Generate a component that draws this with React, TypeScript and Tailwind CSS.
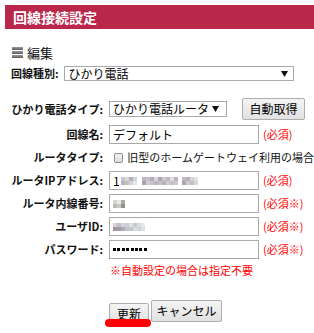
const font = "font-['Noto_Sans_CJK_JP','Noto_Sans',sans-serif]";

function Mosaic({ cols }: { cols: string[][] }) {
  return (
    <div className="flex">
      {cols.map((col, i) => (
        <div key={i} className="flex flex-col">
          {col.map((c, j) => (
            <div key={j} className={`w-[4px] h-[4px] ${c}`} />
          ))}
        </div>
      ))}
    </div>
  );
}

function Arrow() {
  return (
    <svg width="7" height="6" viewBox="0 0 7 6" className="shrink-0">
      <path d="M0 0 H7 L3.5 6 Z" fill="#111" />
    </svg>
  );
}

function Label({ children }: { children: React.ReactNode }) {
  return <div className="w-[103px] shrink-0 text-right font-bold text-[11px] leading-none text-[#111]">{children}</div>;
}

function Required({ mark }: { mark?: boolean }) {
  return <span className="ml-[4px] text-[11px] leading-none text-[#f00]">{mark ? "(必須※)" : "(必須)"}</span>;
}

function Box({ children }: { children?: React.ReactNode }) {
  return (
    <div className="ml-[6px] w-[150px] h-[19px] border border-[#a9a9a9] bg-white flex items-center pl-[3px] text-[12px] leading-none text-black">
      {children}
    </div>
  );
}

const ipCols = [
  ["bg-[#c9c5cb]", "bg-[#b7b3b9]"],
  ["bg-[#dcd9de]", "bg-[#c2bec4]"],
  ["bg-[#b4afb8]", "bg-[#d6d3d8]"],
  ["bg-[#cfd6da]", "bg-[#e3e6e8]"],
];
const ipCols2 = [
  ["bg-[#bdb4c2]", "bg-[#a8a2ad]"],
  ["bg-[#c4c0c7]", "bg-[#d2ced4]"],
  ["bg-[#b2adb6]", "bg-[#c8c4cb]"],
  ["bg-[#d8d4da]", "bg-[#bbb6be]"],
  ["bg-[#aaa5af]", "bg-[#c6c1c8]"],
  ["bg-[#cdc8cf]", "bg-[#b6b1b9]"],
  ["bg-[#bfbac2]", "bg-[#d0ccd2]"],
  ["bg-[#e0dde2]", "bg-[#c3bfc6]"],
  ["bg-[#b9b4bc]", "bg-[#cbc7cd]"],
];
const ipCols3 = [
  ["bg-[#c0bbc4]", "bg-[#aaa4b0]"],
  ["bg-[#b6b0bb]", "bg-[#cfcad3]"],
  ["bg-[#d7d3da]", "bg-[#c4c0c8]"],
  ["bg-[#e4e1e6]", "bg-[#dad7dc]"],
];
const extCols = [
  ["bg-[#d6d8d2]", "bg-[#b9bcb4]"],
  ["bg-[#e8e8e4]", "bg-[#c9cac5]"],
  ["bg-[#a9aaa6]", "bg-[#8f918c]"],
];
const userCols = [
  ["bg-[#d8cdd0]", "bg-[#a59598]"],
  ["bg-[#c8bcc4]", "bg-[#9f9aa8]"],
  ["bg-[#d7d2de]", "bg-[#b2abbb]"],
  ["bg-[#cfcbd6]", "bg-[#c2c6cc]"],
  ["bg-[#e2e0e6]", "bg-[#bfc6c4]"],
  ["bg-[#c6ccd2]", "bg-[#d8dde0]"],
  ["bg-[#d9dbe2]", "bg-[#cfd3da]"],
  ["bg-[#e6e7ec]", "bg-[#dde0e4]"],
];

export default function App() {
  return (
    <div className={`${font} w-[314px] h-[333px] bg-white overflow-hidden flex flex-col`}>
      <div className="ml-[5px] mt-[5px] h-[24px] shrink-0 bg-[#b9274a] flex items-center pl-[8px] text-white font-bold text-[14px] leading-none">
        回線接続設定
      </div>

      <div className="mt-[16px] ml-[12px] h-[14px] flex items-center gap-[4px]">
        <div className="w-[11px] flex flex-col gap-[1px]">
          <div className="h-[3px] bg-gradient-to-b from-[#9a9a9a] to-[#5e5e5e]" />
          <div className="h-[3px] bg-gradient-to-b from-[#9a9a9a] to-[#5e5e5e]" />
          <div className="h-[3px] bg-gradient-to-b from-[#9a9a9a] to-[#5e5e5e]" />
        </div>
        <span className="text-[13px] leading-none text-[#111]">編集</span>
      </div>

      <div className="mt-[7px] ml-[11px] h-[15px] flex items-center">
        <span className="font-bold text-[11px] leading-none text-[#111]">回線種別:</span>
        <div className="ml-[5px] w-[230px] h-[15px] border border-[#a9a9a9] bg-white flex items-center justify-between pl-[4px] pr-[5px]">
          <span className="text-[12px] leading-none text-black">ひかり電話</span>
          <Arrow />
        </div>
      </div>

      <div className="mt-[17px] h-[22px] flex items-center">
        <Label>ひかり電話タイプ:</Label>
        <div className="ml-[6px] w-[118px] h-[16px] border border-[#a9a9a9] bg-white flex items-center justify-between pl-[3px] pr-[7px]">
          <span className="text-[12px] leading-none text-black">ひかり電話ルータ</span>
          <Arrow />
        </div>
        <button className="ml-[15px] w-[63px] h-[22px] border border-[#adadad] rounded-[2px] bg-gradient-to-b from-[#f4f4f4] to-[#e1e1e1] text-[12px] leading-none text-black">
          自動取得
        </button>
      </div>

      <div className="mt-[5px] flex flex-col gap-[4px]">
        <div className="h-[19px] flex items-center">
          <Label>回線名:</Label>
          <Box>デフォルト</Box>
          <Required />
        </div>
        <div className="h-[19px] flex items-center">
          <Label>ルータタイプ:</Label>
          <div className="ml-[11px] w-[10px] h-[10px] rounded-[2px] border border-[#8f8f8f] bg-gradient-to-b from-[#f2f2f2] to-[#dcdcdc]" />
          <span className="ml-[4px] text-[11px] leading-none text-[#111] whitespace-nowrap">旧型のホームゲートウェイ利用の場合</span>
        </div>
        <div className="h-[19px] flex items-center">
          <Label>ルータIPアドレス:</Label>
          <Box>
            <span className="mr-[1px]">1</span>
            <Mosaic cols={ipCols} />
            <div className="w-[5px]" />
            <Mosaic cols={ipCols2} />
            <div className="w-[4px]" />
            <Mosaic cols={ipCols3} />
          </Box>
          <Required />
        </div>
        <div className="h-[19px] flex items-center">
          <Label>ルータ内線番号:</Label>
          <Box>
            <Mosaic cols={extCols} />
          </Box>
          <Required mark />
        </div>
        <div className="h-[19px] flex items-center">
          <Label>ユーザID:</Label>
          <Box>
            <Mosaic cols={userCols} />
          </Box>
          <Required mark />
        </div>
        <div className="h-[19px] flex items-center">
          <Label>パスワード:</Label>
          <Box>
            <div className="flex gap-[1.4px]">
              {Array.from({ length: 8 }).map((_, i) => (
                <div key={i} className="w-[3px] h-[3px] bg-black" />
              ))}
            </div>
          </Box>
          <Required mark />
        </div>
      </div>

      <div className="mt-[6px] ml-[110px] h-[12px] text-[11px] leading-none text-[#f00] whitespace-nowrap">
        ※自動設定の場合は指定不要
      </div>

      <div className="mt-[23px] ml-[109px] flex gap-[2px]">
        <div className="relative">
          <button className="w-[40px] h-[22px] border border-[#adadad] rounded-[2px] bg-gradient-to-b from-[#f4f4f4] to-[#e1e1e1] text-[12px] leading-none text-black">
            更新
          </button>
          <div className="absolute left-[-4px] top-[19px] w-[46px] h-[8px] rounded-full bg-[#f00]" />
        </div>
        <button className="w-[71px] h-[22px] border border-[#adadad] rounded-[2px] bg-gradient-to-b from-[#f4f4f4] to-[#e1e1e1] text-[12px] leading-none text-black">
          キャンセル
        </button>
      </div>
    </div>
  );
}
